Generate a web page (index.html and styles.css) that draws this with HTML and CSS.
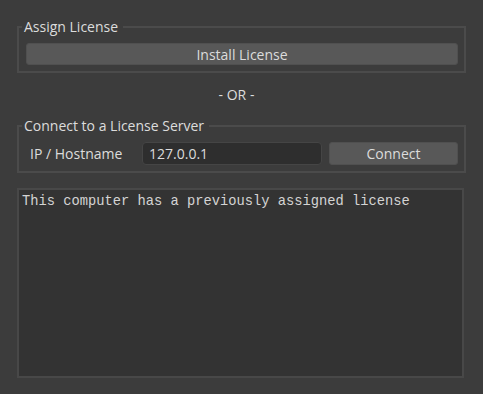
FILE: index.html
```html
<!DOCTYPE html>
<html lang="en">
<head>
    <meta charset="UTF-8">
    <meta name="viewport" content="width=device-width, initial-scale=1.0">
    <title>License</title>
    <link rel="stylesheet" href="styles.css">
</head>
<body>
    <div class="dialog">
        <fieldset class="group">
            <legend>Assign License</legend>
            <button class="button button-wide">Install License</button>
        </fieldset>

        <div class="or">- OR -</div>

        <fieldset class="group">
            <legend>Connect to a License Server</legend>
            <div class="server-row">
                <label class="server-label" for="host">IP / Hostname</label>
                <input class="host-input" id="host" type="text" value="127.0.0.1">
                <button class="button button-connect">Connect</button>
            </div>
        </fieldset>

        <textarea class="log" readonly>This computer has a previously assigned license</textarea>
    </div>
</body>
</html>
```

FILE: styles.css
```css
html, body {
    margin: 0;
    height: 100%;
}
body {
    background: #3c3c3c;
    color: #dcdcdc;
    font-family: 'Open Sans', 'Noto Sans', sans-serif;
    font-size: 14px;
}
.dialog {
    padding: 18px 17px 0 17px;
}
.group {
    margin: 0;
    min-width: 0;
    padding: 7px 6px 6px 7px;
    border: 2px solid #4b4b4b;
}
.group legend {
    padding: 0 5px 0 2px;
    margin-left: -4px;
    line-height: 18px;
    color: #dcdcdc;
}
.button {
    display: block;
    height: 22px;
    padding: 0;
    background: #585858;
    border: 1px solid #505050;
    border-radius: 3px;
    color: #dcdcdc;
    font-family: inherit;
    font-size: 14px;
}
.button-wide {
    width: 100%;
}
.or {
    text-align: center;
    line-height: 18px;
    margin: 13px 0 13px 0;
    padding-right: 10px;
}
.server-row {
    display: flex;
    align-items: center;
    gap: 7px;
}
.server-label {
    flex: none;
    width: 109px;
    padding-left: 4px;
    box-sizing: border-box;
}
.host-input {
    flex: 1;
    min-width: 0;
    width: 0;
    height: 23px;
    box-sizing: border-box;
    padding: 0 6px;
    background: #2e2e2e;
    border: 1px solid #454545;
    border-radius: 4px;
    color: #dcdcdc;
    font-family: inherit;
    font-size: 14px;
    outline: none;
}
.button-connect {
    flex: none;
    width: 129px;
    height: 23px;
}
.log {
    display: block;
    box-sizing: border-box;
    width: 447px;
    height: 190px;
    margin-top: 15px;
    padding: 4px 3px;
    background: #333333;
    border: 2px solid #484848;
    color: #d4d4d4;
    font-family: 'Liberation Mono', 'Courier New', monospace;
    font-size: 13.75px;
    line-height: 16px;
    resize: none;
    outline: none;
}
```
